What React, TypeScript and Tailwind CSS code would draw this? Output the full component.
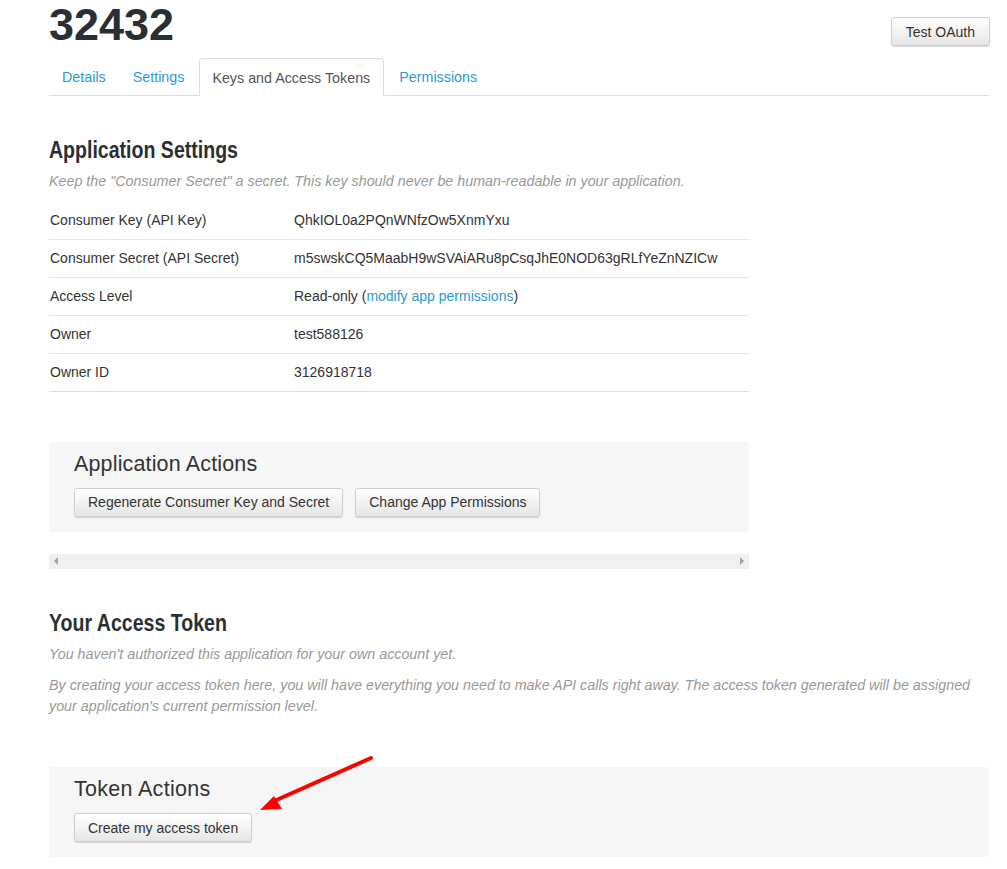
import React from "react";

const rows: { label: string; value: React.ReactNode }[] = [
  { label: "Consumer Key (API Key)", value: "QhkIOL0a2PQnWNfzOw5XnmYxu" },
  { label: "Consumer Secret (API Secret)", value: "m5swskCQ5MaabH9wSVAiARu8pCsqJhE0NOD63gRLfYeZnNZICw" },
  {
    label: "Access Level",
    value: (
      <>
        Read-only (<a className="text-[#2b9bd2]">modify app permissions</a>)
      </>
    ),
  },
  { label: "Owner", value: "test588126" },
  { label: "Owner ID", value: "3126918718" },
];

function Btn({ children }: { children: React.ReactNode }) {
  return (
    <button className="h-[29px] px-[13px] rounded-[3px] border border-[#cfcfcf] bg-gradient-to-b from-[#ffffff] to-[#e6e6e6] shadow-[0_1px_1px_rgba(0,0,0,0.15)] text-[14px] text-[#333] leading-none">
      {children}
    </button>
  );
}

function Heading({ children }: { children: React.ReactNode }) {
  return (
    <h2 className="text-[23px] font-bold leading-[30px] text-[#292f33] origin-left scale-x-[0.85] whitespace-nowrap">
      {children}
    </h2>
  );
}

export default function App() {
  return (
    <div className="relative min-h-[869px] bg-white text-[#333] font-['Liberation_Sans',Arial,sans-serif] text-[14px]">
      <div className="w-[940px] ml-[49px]">
        <div className="flex items-start justify-between">
          <h1 className="mt-[2px] text-[45px] font-bold leading-[46px] text-[#292f33]">32432</h1>
          <div className="mt-[17px] -mr-px">
            <button className="h-[29px] px-[14px] rounded-[3px] border border-[#cfcfcf] bg-gradient-to-b from-[#ffffff] to-[#e6e6e6] shadow-[0_1px_1px_rgba(0,0,0,0.15)] text-[14px] text-[#333] leading-none">
              Test OAuth
            </button>
          </div>
        </div>

        <div className="mt-[10px] flex border-b border-[#dddddd] h-[38px] text-[14.3px]">
          <a className="pl-[13px] pr-[12px] pt-[9px] text-[#2b9bd2]">Details</a>
          <a className="px-[15px] pt-[9px] text-[#2b9bd2]">Settings</a>
          <a className="pl-[12px] pr-[13px] pt-[9px] -mb-px h-[38px] border border-[#dddddd] border-b-white bg-white rounded-t-[4px] text-[#555]">
            Keys and Access Tokens
          </a>
          <a className="px-[15px] pt-[9px] text-[#2b9bd2]">Permissions</a>
        </div>

        <div className="mt-[39px]">
          <Heading>Application Settings</Heading>
        </div>
        <p className="mt-[6px] italic text-[#999] text-[14.3px]">
          Keep the "Consumer Secret" a secret. This key should never be human-readable in your application.
        </p>

        <table className="mt-[9px] w-[700px] border-collapse">
          <tbody>
            {rows.map((r) => (
              <tr key={r.label} className="border-b border-[#e5e5e5] last:border-[#dddddd]">
                <td className="h-[38px] w-[243px] pl-px align-middle">{r.label}</td>
                <td className="h-[38px] pl-[2px] align-middle">{r.value}</td>
              </tr>
            ))}
          </tbody>
        </table>

        <div className="mt-[50px] w-[700px] h-[90px] rounded-[4px] bg-[#f6f6f6] px-[25px] pt-[10px]">
          <h3 className="text-[21.5px] tracking-[0.15px] leading-[24px] text-[#333]">Application Actions</h3>
          <div className="mt-[12px] flex gap-[12px]">
            <Btn>Regenerate Consumer Key and Secret</Btn>
            <Btn>Change App Permissions</Btn>
          </div>
        </div>

        <div className="mt-[22px] w-[700px] h-[15px] bg-[#f0f0f0] flex items-center justify-between px-[5px]">
          <span className="w-0 h-0 border-y-[4px] border-y-transparent border-r-[4px] border-r-[#a3a3a3]" />
          <span className="w-0 h-0 border-y-[4px] border-y-transparent border-l-[4px] border-l-[#a3a3a3]" />
        </div>

        <div className="mt-[39px]">
          <Heading>Your Access Token</Heading>
        </div>
        <p className="mt-[6px] italic text-[#999] text-[14.3px]">
          You haven't authorized this application for your own account yet.
        </p>
        <p className="mt-[10px] italic text-[#999] text-[14.3px] leading-[21px]">
          By creating your access token here, you will have everything you need to make API calls right away. The access token generated will be assigned your application's current permission level.
        </p>

        <div className="mt-[50px] w-[940px] h-[90px] rounded-[4px] bg-[#f6f6f6] px-[25px] pt-[10px]">
          <h3 className="text-[21.5px] tracking-[0.3px] leading-[24px] text-[#333]">Token Actions</h3>
          <div className="mt-[12px] flex">
            <Btn>Create my access token</Btn>
          </div>
        </div>
      </div>

      <svg className="absolute left-[200px] top-[750px] pointer-events-none" width="190" height="70" viewBox="200 750 190 70">
        <line x1="371" y1="758" x2="272" y2="802" stroke="#ff0000" strokeWidth="4" strokeLinecap="round" />
        <polygon points="260,810 274,796 282,809" fill="#ff0000" />
      </svg>
    </div>
  );
}
